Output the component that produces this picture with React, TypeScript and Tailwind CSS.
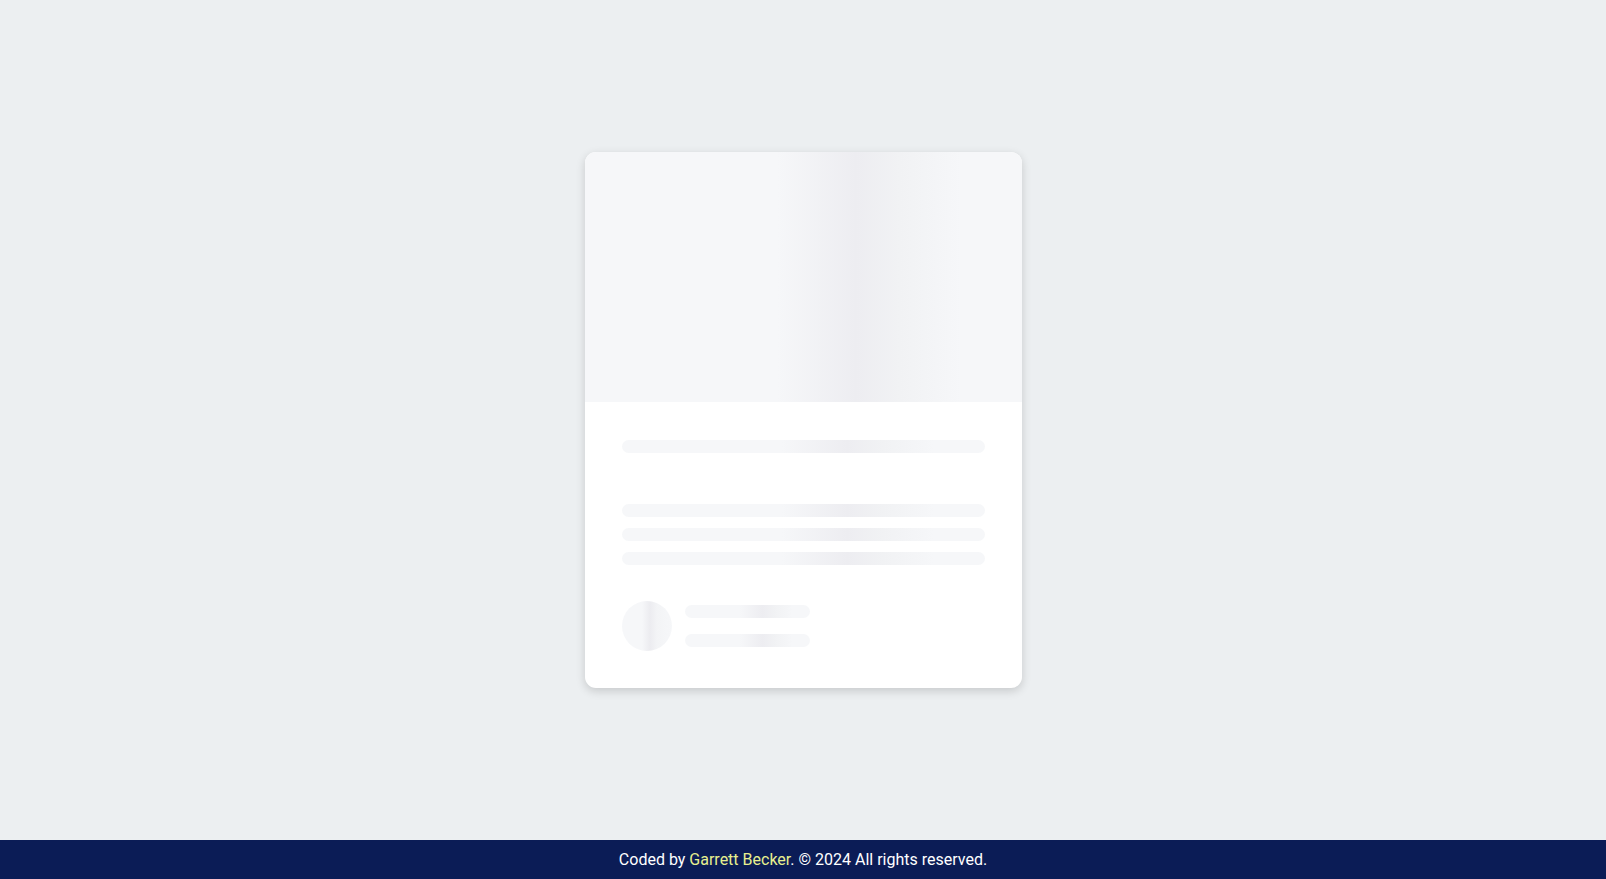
const shimmer =
  'bg-[linear-gradient(90deg,#f6f7f9_0%,#f6f7f9_44%,#ededf1_62%,#f1f2f4_72%,#f6f7f9_86%,#f6f7f9_100%)]';

function Bar({ className }: { className: string }) {
  return <div className={`h-[13px] rounded-full ${shimmer} ${className}`} />;
}

export default function App() {
  return (
    <div className="flex h-screen flex-col bg-[#eceff1] font-['Roboto',sans-serif]">
      <main className="flex flex-1 items-center justify-center">
        {/* Skeleton card */}
        <div className="w-[437px] overflow-hidden rounded-[11px] bg-white shadow-[0_3px_10px_rgba(0,0,0,0.16)]">
          <div className={`h-[250px] ${shimmer}`} />
          <div className="px-[37px] pt-[38px] pb-[37px]">
            <Bar className="h-[12px] w-full" />
            <div className="mt-[51px] flex flex-col gap-[11px]">
              <Bar className="w-full" />
              <Bar className="w-full" />
              <Bar className="w-full" />
            </div>
            <div className="mt-[36px] flex items-center gap-[13px]">
              <div className="h-[50px] w-[50px] shrink-0 rounded-full bg-[linear-gradient(90deg,#f6f7f9_0%,#f6f7f9_40%,#ececf0_56%,#f3f4f6_70%,#f6f7f9_100%)]" />
              <div className="flex flex-col gap-[16px]">
                <Bar className="h-[12px] w-[125px]" />
                <Bar className="w-[125px]" />
              </div>
            </div>
          </div>
        </div>
      </main>
      <footer className="flex h-[39px] items-center justify-center bg-[#0b1c56] text-[16px] text-white">
        <p>
          Coded by <span className="text-[#e8f08f]">Garrett Becker</span>. © 2024 All rights reserved.
        </p>
      </footer>
    </div>
  );
}
